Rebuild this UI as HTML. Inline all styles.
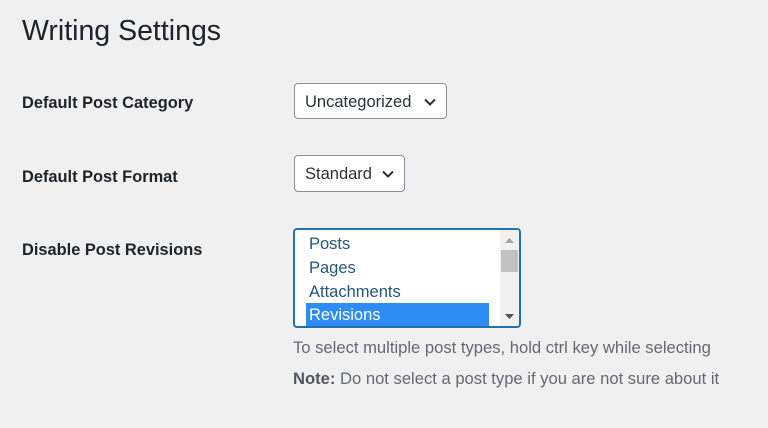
<!DOCTYPE html>
<html><head><style>
body{margin:0;width:768px;height:428px;background:#f0f0f1;font-family:"Liberation Sans",sans-serif;color:#1d2327;position:relative;overflow:hidden}
.a{position:absolute;white-space:nowrap}
h1{position:absolute;left:22px;top:15px;margin:0;font-size:28.5px;font-weight:400;color:#1d2327}
.lbl{font-size:16.4px;font-weight:700;left:22px}
.sel{position:absolute;background:#fff;border:1px solid #8c8f94;border-radius:4px;font-size:16.5px;color:#2c3338;box-sizing:border-box;padding-left:10px;line-height:36px}
.sel svg{position:absolute;right:10px;top:14px}
.lb{position:absolute;left:293px;top:228px;width:228px;height:100px;box-sizing:border-box;border:2px solid #2271b1;border-radius:4px;background:#fff;overflow:hidden}
.opt{position:absolute;left:11px;width:183px;height:24px;line-height:24px;font-size:16.5px;color:#24577a;padding-left:3px;box-sizing:border-box}
.help{font-size:16.6px;color:#646970;left:293px}
</style></head><body>
<h1>Writing Settings</h1>
<div class="a lbl" style="top:94px">Default Post Category</div>
<div class="a lbl" style="top:168px">Default Post Format</div>
<div class="a lbl" style="top:241px">Disable Post Revisions</div>
<div class="sel" style="left:294px;top:83px;width:153px;height:36px">Uncategorized<svg width="12" height="8" viewBox="0 0 12 8"><path d="M1 1.5l5 5 5-5" fill="none" stroke="#2c3338" stroke-width="2"/></svg></div>
<div class="sel" style="left:294px;top:155px;width:111px;height:37px">Standard<svg width="12" height="8" viewBox="0 0 12 8"><path d="M1 1.5l5 5 5-5" fill="none" stroke="#2c3338" stroke-width="2"/></svg></div>
<div class="lb">
<div class="opt" style="top:2px">Posts</div>
<div class="opt" style="top:26px">Pages</div>
<div class="opt" style="top:50px">Attachments</div>
<div class="opt" style="top:73px;background:#2e8cf7;color:#fff">Revisions</div>
<div style="position:absolute;left:205px;top:0;width:19px;height:96px;background:#f1f1f1"></div>
<div style="position:absolute;left:206px;top:20px;width:17px;height:22px;background:#c1c1c1"></div>
<svg style="position:absolute;left:210px;top:8px" width="9" height="6"><path d="M0 5L4.5 0 9 5z" fill="#a3a3a3"/></svg>
<svg style="position:absolute;left:210px;top:84px" width="9" height="6"><path d="M0 0L4.5 5 9 0z" fill="#505050"/></svg>
</div>
<div class="a help" style="top:338px">To select multiple post types, hold ctrl key while selecting</div>
<div class="a help" style="top:369px"><b style="color:#50575e">Note:</b> Do not select a post type if you are not sure about it</div>
</body></html>
